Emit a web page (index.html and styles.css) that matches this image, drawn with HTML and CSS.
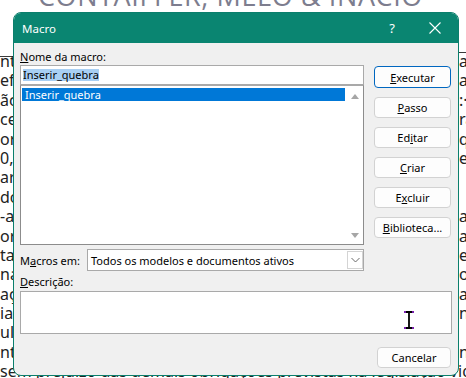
FILE: index.html
```html
<!DOCTYPE html>
<html>
<head>
    <title>Macro</title>
    <link rel="stylesheet" href="styles.css">
</head>
<body>
    <div class="doc">
        <h1 class="doc-title">CONTAIFFER, MELO &amp; INÁCIO</h1>
        <div class="doc-rules">
            <div class="rule rule-left"></div>
            <div class="rule rule-right"></div>
        </div>
        <div class="doc-body">
            <span>nto</span><span>ar</span>
            <span>efe</span><span>ac</span>
            <span>ãcs</span><span>:·</span>
            <span>ces</span><span>ra</span>
            <span>ord</span><span>qu</span>
            <span>0,00</span><span>e.</span>
            <span>arte</span><span></span>
            <span>dos</span><span></span>
            <span>-ap</span><span>a</span>
            <span>orig</span><span>a</span>
            <span>tal</span><span>ec</span>
            <span>nal</span><span>o</span>
            <span>açõ</span><span>al</span>
            <span>ial</span><span>n</span>
            <span>ula</span><span></span>
            <span>nte</span><span>n·</span>
            <span class="doc-full">sem prejuízo das demais obrigações previstas na legislação vigente aplicável</span>
        </div>
    </div>

    <div class="dialog">
        <div class="titlebar">
            <span class="title">Macro</span>
            <span class="help">?</span>
            <svg class="close" width="12" height="12" viewBox="0 0 12 12">
                <path d="M0.5 0.5L11.5 11.5M11.5 0.5L0.5 11.5" stroke="#fff" stroke-width="1.1" fill="none"/>
            </svg>
        </div>
        <div class="content">
            <div class="main">
                <div class="left-col">
                    <div class="label"><u>N</u>ome da macro:</div>
                    <div class="name-input"><span class="sel-text">Inserir_quebra</span></div>
                    <div class="listbox">
                        <div class="list-items">
                            <div class="item selected">Inserir_quebra</div>
                        </div>
                        <div class="scrollbar">
                            <span class="arrow up"></span>
                            <span class="arrow down"></span>
                        </div>
                    </div>
                    <div class="macros-row">
                        <span class="macros-label">M<u>a</u>cros em:</span>
                        <div class="select">
                            <span class="select-text">Todos os modelos e documentos ativos</span>
                            <span class="select-btn">
                                <svg width="9" height="6" viewBox="0 0 9 6">
                                    <path d="M0.5 1L4.5 5L8.5 1" stroke="#6a6a6a" stroke-width="1" fill="none"/>
                                </svg>
                            </span>
                        </div>
                    </div>
                </div>
                <div class="buttons">
                    <button class="btn default"><u>E</u>xecutar</button>
                    <button class="btn"><u>P</u>asso</button>
                    <button class="btn">Ed<u>i</u>tar</button>
                    <button class="btn"><u>C</u>riar</button>
                    <button class="btn">E<u>x</u>cluir</button>
                    <button class="btn"><u>B</u>iblioteca...</button>
                </div>
            </div>
            <div class="label desc-label"><u>D</u>escrição:</div>
            <div class="desc-box">
                <svg class="ibeam" width="10" height="18" viewBox="0 0 10 18">
                    <path d="M1 1H9M1 17H9M5 1V17" stroke="#000" stroke-width="1.8" fill="none"/>
                    <rect x="0" y="0" width="2" height="2" fill="#7a1fb0"/>
                    <rect x="8" y="0" width="2" height="2" fill="#7a1fb0"/>
                    <rect x="0" y="16" width="2" height="2" fill="#7a1fb0"/>
                    <rect x="8" y="16" width="2" height="2" fill="#7a1fb0"/>
                </svg>
            </div>
            <div class="footer">
                <button class="btn cancel">Cancelar</button>
            </div>
        </div>
    </div>
</body>
</html>
```

FILE: styles.css
```css
* {
    box-sizing: border-box;
}

body {
    margin: 0;
    width: 466px;
    height: 378px;
    overflow: hidden;
    position: relative;
    background: #fff;
    font-family: "Noto Sans", sans-serif;
}

/* document behind the dialog */
.doc-title {
    margin: -20px 0 0 38px;
    height: 34px;
    width: 428px;
    overflow: hidden;
    font-family: "Open Sans", sans-serif;
    font-weight: normal;
    font-size: 27px;
    line-height: 32px;
    letter-spacing: 0.6px;
    color: #7d7d8e;
    white-space: nowrap;
}

.doc-rules {
    display: grid;
    grid-template-columns: 459px 7px;
    height: 0;
}

.rule {
    height: 1px;
    background: #3a3a3a;
}

.rule-left {
    margin-top: 42px;
}

.rule-right {
    margin-top: 38px;
}

.doc-body {
    display: grid;
    grid-template-columns: 459px 7px;
    grid-auto-rows: 19.4px;
    padding-top: 38px;
    font-size: 16px;
    line-height: 19.4px;
    color: #222;
    white-space: nowrap;
}

.doc-body span {
    overflow: hidden;
}

.doc-body .doc-full {
    grid-column: 1 / 3;
}

/* dialog window */
.dialog {
    position: absolute;
    left: 13px;
    top: 12px;
    width: 446px;
    height: 364px;
    border: 1px solid #0b7f6c;
    border-radius: 8px;
    background: #f0f0f0;
    overflow: hidden;
    font-size: 11px;
    color: #000;
}

.titlebar {
    height: 30px;
    background: #0a8571;
    color: #fff;
    font-size: 11.5px;
    display: flex;
    align-items: center;
    padding-left: 8px;
}

.title {
    flex: 1;
}

.help {
    font-size: 13px;
    margin-right: 34px;
}

.close {
    margin-right: 17px;
}

.content {
    padding: 6px 6px 0 6px;
}

.main {
    display: flex;
    gap: 10px;
}

.left-col {
    width: 344px;
}

.label {
    height: 16px;
    line-height: 16px;
}

.name-input {
    height: 20px;
    border: 1px solid #a9a9a9;
    background: #fff;
    padding: 0 2px;
    display: flex;
    align-items: center;
}

.sel-text {
    background: #a8cff3;
    line-height: 12px;
}

.listbox {
    height: 160px;
    border: 1px solid #8c8c8c;
    border-top-color: #a9a9a9;
    background: #fff;
    display: flex;
}

.list-items {
    flex: 1;
    padding: 2px 1px;
}

.item {
    height: 13px;
    line-height: 13px;
    padding-left: 3px;
}

.item.selected {
    background: #0078d7;
    color: #fff;
}

.scrollbar {
    width: 17px;
    display: flex;
    flex-direction: column;
    justify-content: space-between;
    align-items: center;
    padding: 8px 0 6px;
}

.arrow {
    width: 0;
    height: 0;
    border-left: 4px solid transparent;
    border-right: 4px solid transparent;
}

.arrow.up {
    border-bottom: 5px solid #a6a6a6;
}

.arrow.down {
    border-top: 5px solid #a6a6a6;
}

.macros-row {
    display: flex;
    align-items: center;
    margin-top: 4px;
}

.macros-label {
    width: 67px;
}

.select {
    flex: 1;
    height: 22px;
    border: 1px solid #a9a9a9;
    background: #fff;
    display: flex;
    align-items: center;
    padding: 1px 0 1px 3px;
}

.select-text {
    flex: 1;
}

.select-btn {
    width: 16px;
    height: 18px;
    border: 1px solid #d4d4d4;
    display: flex;
    align-items: center;
    justify-content: center;
}

.buttons {
    width: 77px;
    display: flex;
    flex-direction: column;
    gap: 9px;
    padding-top: 17px;
}

.btn {
    height: 21px;
    padding: 0;
    border: 1px solid #d2d2d2;
    border-radius: 4px;
    background: #fdfdfd;
    font-family: inherit;
    font-size: 11px;
    color: #000;
}

.btn.default {
    height: 22px;
    border-color: #0067c0;
}

.desc-label {
    margin-top: 3px;
}

.desc-box {
    position: relative;
    height: 43px;
    margin-top: 1px;
    border: 1px solid #a9a9a9;
    background: #fff;
}

.ibeam {
    position: absolute;
    left: 383px;
    top: 19px;
}

.footer {
    display: flex;
    justify-content: flex-end;
    margin-top: 13px;
}

.cancel {
    width: 74px;
    margin-right: 1px;
}
```
